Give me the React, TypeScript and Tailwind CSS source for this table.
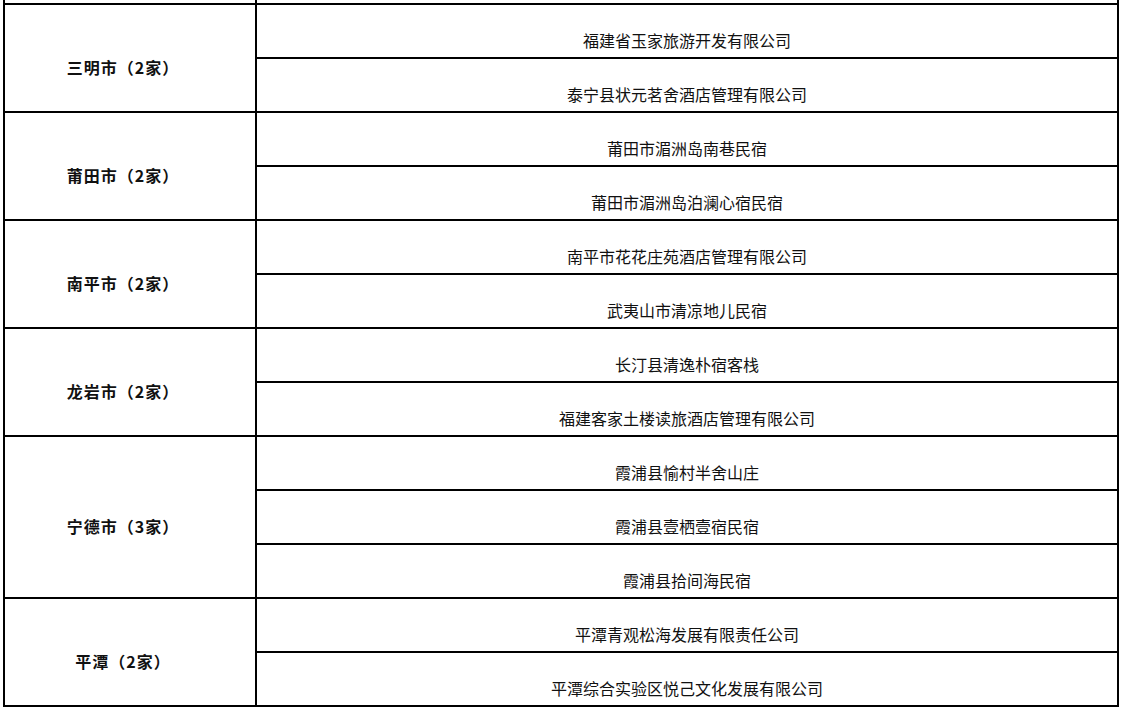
const groups: { city: string; count: number; items: string[] }[] = [
  { city: '三明市', count: 2, items: ['福建省玉家旅游开发有限公司', '泰宁县状元茗舍酒店管理有限公司'] },
  { city: '莆田市', count: 2, items: ['莆田市湄洲岛南巷民宿', '莆田市湄洲岛泊澜心宿民宿'] },
  { city: '南平市', count: 2, items: ['南平市花花庄苑酒店管理有限公司', '武夷山市清凉地儿民宿'] },
  { city: '龙岩市', count: 2, items: ['长汀县清逸朴宿客栈', '福建客家土楼读旅酒店管理有限公司'] },
  { city: '宁德市', count: 3, items: ['霞浦县愉村半舍山庄', '霞浦县壹栖壹宿民宿', '霞浦县拾间海民宿'] },
  { city: '平潭', count: 2, items: ['平潭青观松海发展有限责任公司', '平潭综合实验区悦己文化发展有限公司'] },
];

export default function App() {
  return (
    <div
      className="h-[710px] w-[1126px] overflow-hidden bg-white text-[16px] text-[#111]"
      style={{ fontFamily: '"Noto Sans CJK SC", "Liberation Sans", sans-serif' }}
    >
      <div className="ml-[3px] w-[1116px] border-x-2 border-black">
        {/* cut-off row above */}
        <div className="flex h-[3px]">
          <div className="w-[252px] border-r-2 border-black" />
          <div className="flex-1" />
        </div>

        {groups.map((g) => (
          <div key={g.city} className="flex border-t-2 border-black">
            <div className="flex w-[252px] items-center justify-center border-r-2 border-black pt-[18px] pr-[14px] font-bold tracking-[1px]">
              {g.city}（{g.count}家）
            </div>
            <div className="flex flex-1 flex-col">
              {g.items.map((item, i) => (
                <div
                  key={item}
                  className={
                    i > 0
                      ? 'flex h-[54px] items-center justify-center border-t-2 border-black pt-[18px]'
                      : 'flex h-[52px] items-center justify-center pt-[18px]'
                  }
                >
                  {item}
                </div>
              ))}
            </div>
          </div>
        ))}
        <div className="border-t-2 border-black" />
      </div>
    </div>
  );
}
